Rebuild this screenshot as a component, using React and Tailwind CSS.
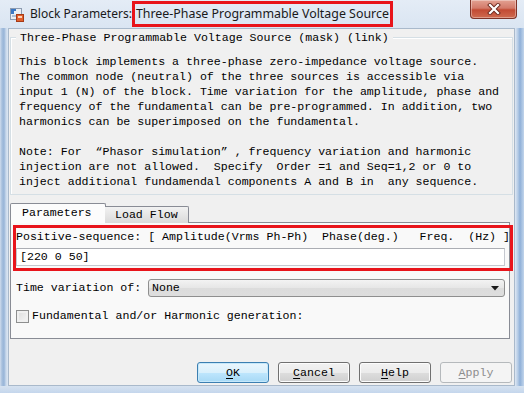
const mono = { fontFamily: '"Liberation Mono", "DejaVu Sans Mono", monospace' };
const ui = { fontFamily: '"Noto Sans", "Open Sans", sans-serif' };

function TitleIcon() {
  return (
    <svg width="16" height="16" viewBox="0 0 16 16" className="shrink-0">
      <rect x="1.5" y="1.5" width="11" height="11" fill="#e9eef4" stroke="#8c9bb0" />
      <path d="M2 2 L7 2 L7 4 L5 4 L5 7 L2 7 Z" fill="#3b78c4" />
      <path d="M3 9 L7 9" stroke="#6e8db5" />
      <rect x="7.5" y="7.5" width="7" height="7" fill="#e2602c" stroke="#a63a16" />
      <rect x="9" y="9" width="4" height="2" fill="#fbd1b8" />
    </svg>
  );
}

function CloseButton() {
  return (
    <div className="absolute right-[7px] top-0 w-[47px] h-[19px] rounded-b-[4px] border border-t-0 border-[#7e3328] bg-[linear-gradient(to_bottom,#e3a192_0%,#d37a6a_45%,#c24a33_55%,#cf6b50_100%)] flex items-center justify-center shadow-[inset_0_0_0_1px_rgba(255,255,255,0.35)]">
      <svg width="14" height="12" viewBox="0 0 14 12">
        <path d="M3 2 L11 10 M11 2 L3 10" stroke="#6b2a20" strokeWidth="4" strokeLinecap="square" />
        <path d="M3 2 L11 10 M11 2 L3 10" stroke="#ffffff" strokeWidth="2.2" strokeLinecap="square" />
      </svg>
    </div>
  );
}

function Btn({ first, rest, isDefault, disabled }) {
  let cls =
    "w-[72px] h-[21px] rounded-[3px] border flex items-center justify-center text-[11.6px] ";
  if (disabled) {
    cls += "border-[#b5b9bc] bg-[#f4f4f4] text-[#8d8d8d]";
  } else if (isDefault) {
    cls +=
      "border-[#3c7fb1] bg-[linear-gradient(to_bottom,#eaf6fd_0%,#d9f0fc_50%,#bee6fd_51%,#a7d9f5_100%)] text-black shadow-[inset_0_0_0_1px_#c6e8fa]";
  } else {
    cls +=
      "border-[#707070] bg-[linear-gradient(to_bottom,#f2f2f2_0%,#ebebeb_50%,#dddddd_51%,#cfcfcf_100%)] text-black shadow-[inset_0_0_0_1px_#fcfcfc]";
  }
  return (
    <div className={cls} style={mono}>
      <span className="underline underline-offset-[2px]">{first}</span>
      <span>{rest}</span>
    </div>
  );
}

const desc = [
  "This block implements a three-phase zero-impedance voltage source.",
  "The common node (neutral) of the three sources is accessible via",
  "input 1 (N) of the block. Time variation for the amplitude, phase and",
  "frequency of the fundamental can be pre-programmed. In addition, two",
  "harmonics can be superimposed on the fundamental.",
  " ",
  "Note: For  \u201cPhasor simulation\u201d , frequency variation and harmonic",
  "injection are not allowed.  Specify  Order =1 and Seq=1,2 or 0 to",
  "inject additional fundamendal components A and B in  any sequence.",
];

export default function App() {
  return (
    <div className="w-[524px] h-[393px] flex flex-col overflow-hidden bg-[#dbe6f3]">
      {/* title bar */}
      <div className="relative h-[28px] shrink-0 flex items-center bg-[linear-gradient(to_bottom,#e4ecf6,#dae5f2)]">
        <div className="ml-[9px] mt-[1px]">
          <TitleIcon />
        </div>
        <span className="ml-[5px] text-[12px] text-[#1a1a1a]" style={ui}>
          Block Parameters:
        </span>
        <span
          className="ml-0 h-[26px] flex items-center pl-[1px] pr-[1px] border-[3px] border-[#e8141b] text-[12.4px] text-[#1a1a1a]"
          style={ui}
        >
          Three-Phase Programmable Voltage Source
        </span>
        <CloseButton />
      </div>

      <div className="flex-1 flex min-h-0">
        {/* left frame */}
        <div className="w-[8px] shrink-0 bg-[linear-gradient(to_right,#cfdced_0px,#a6bfdd_2px,#98b5d8_4px,#c9d9ec_6px,#dde7f3_8px)]" />

        {/* dialog content */}
        <div className="flex-1 flex flex-col bg-[#f0f0f0] border border-[#a9b9cb] px-[1px] text-black" style={mono}>
          {/* group box */}
          <div className="relative mt-[8px] border border-[#d5dfe5] shadow-[inset_1px_1px_0_#ffffff] pl-[8px] pt-[16px] pb-[5px]">
            <span className="absolute left-[5px] -top-[8px] px-[4px] bg-[#f0f0f0] text-[11.6px] leading-[15px] whitespace-pre">
              Three-Phase Programmable Voltage Source (mask) (link)
            </span>
            {desc.map((line, i) => (
              <div key={i} className="text-[11.6px] leading-[15px] whitespace-pre h-[15px]">
                {line}
              </div>
            ))}
          </div>

          {/* tabs */}
          <div className="mt-[8px] flex items-end h-[20px] relative z-10">
            <div className="w-[96px] h-[20px] border border-b-0 border-[#898c95] bg-[#fcfcfc] pl-[11px] text-[11.6px] leading-[18px] rounded-t-[2px]">
              Parameters
            </div>
            <div className="-ml-[1px] w-[84px] h-[17px] border border-b-0 border-l-0 border-[#898c95] bg-[linear-gradient(to_bottom,#f2f2f2,#dadada)] pl-[10px] text-[11.6px] leading-[16px] rounded-tr-[2px]">
              Load Flow
            </div>
          </div>

          {/* tab panel */}
          <div className="-mt-[1px] mr-[3px] border border-[#898c95] bg-[#f9f9f9] pl-[2px] pt-[2px] pb-[13px] flex flex-col">
            <div className="-mr-[4px] border-[3px] border-[#e8141b] pt-0 pb-[2px]">
              <div className="h-[18px] leading-[18px] text-[11.6px] whitespace-pre">
                {"Positive-sequence: [ Amplitude(Vrms Ph-Ph)  Phase(deg.)   Freq.  (Hz) ]"}
              </div>
              <div className="mt-[2px] mr-[5px] h-[18px] bg-white border border-[#c5c8cf] border-t-[#abadb3] pl-[3px] text-[11.6px] leading-[16px]">
                [220 0 50]
              </div>
            </div>

            <div className="mt-[8px] ml-[3px] h-[18px] flex items-center">
              <span className="w-[132px] text-[11.6px] whitespace-pre">Time variation of:</span>
              <div className="w-[357px] h-[18px] rounded-[3px] border border-[#8f8f8f] bg-[linear-gradient(to_bottom,#f3f3f3,#e6e6e6_50%,#dcdcdc_51%,#dedede)] flex items-center pl-[3px] pr-[5px]">
                <span className="flex-1 text-[11.6px]">None</span>
                <svg width="8" height="5" viewBox="0 0 8 5">
                  <path d="M0 0 L8 0 L4 4.5 Z" fill="#1a1a1a" />
                </svg>
              </div>
            </div>

            <div className="mt-[10px] ml-[3px] h-[18px] flex items-center">
              <div className="w-[13px] h-[13px] border border-[#8e8f8f] bg-[linear-gradient(to_bottom_right,#dcdcdc,#f6f6f6)] shadow-[inset_0_0_0_2px_#f0f0f0]" />
              <span className="ml-[3px] text-[11.6px] whitespace-pre">Fundamental and/or Harmonic generation:</span>
            </div>
          </div>

          {/* buttons */}
          <div className="mt-[23px] flex justify-end gap-[9px] pr-[1px]">
            <Btn first="O" rest="K" isDefault />
            <Btn first="C" rest="ancel" />
            <Btn first="H" rest="elp" />
            <Btn first="A" rest="pply" disabled />
          </div>
        </div>

        {/* right frame */}
        <div className="w-[10px] shrink-0 bg-[linear-gradient(to_right,#dfe8f3_0px,#b3cae5_3px,#8fb0d8_5px,#a9c3e2_7px,#cfdef0_10px)]" />
      </div>

      {/* bottom frame */}
      <div className="h-[7px] shrink-0 bg-[linear-gradient(to_bottom,#d6e2f0,#c4d6ec)]" />
    </div>
  );
}
